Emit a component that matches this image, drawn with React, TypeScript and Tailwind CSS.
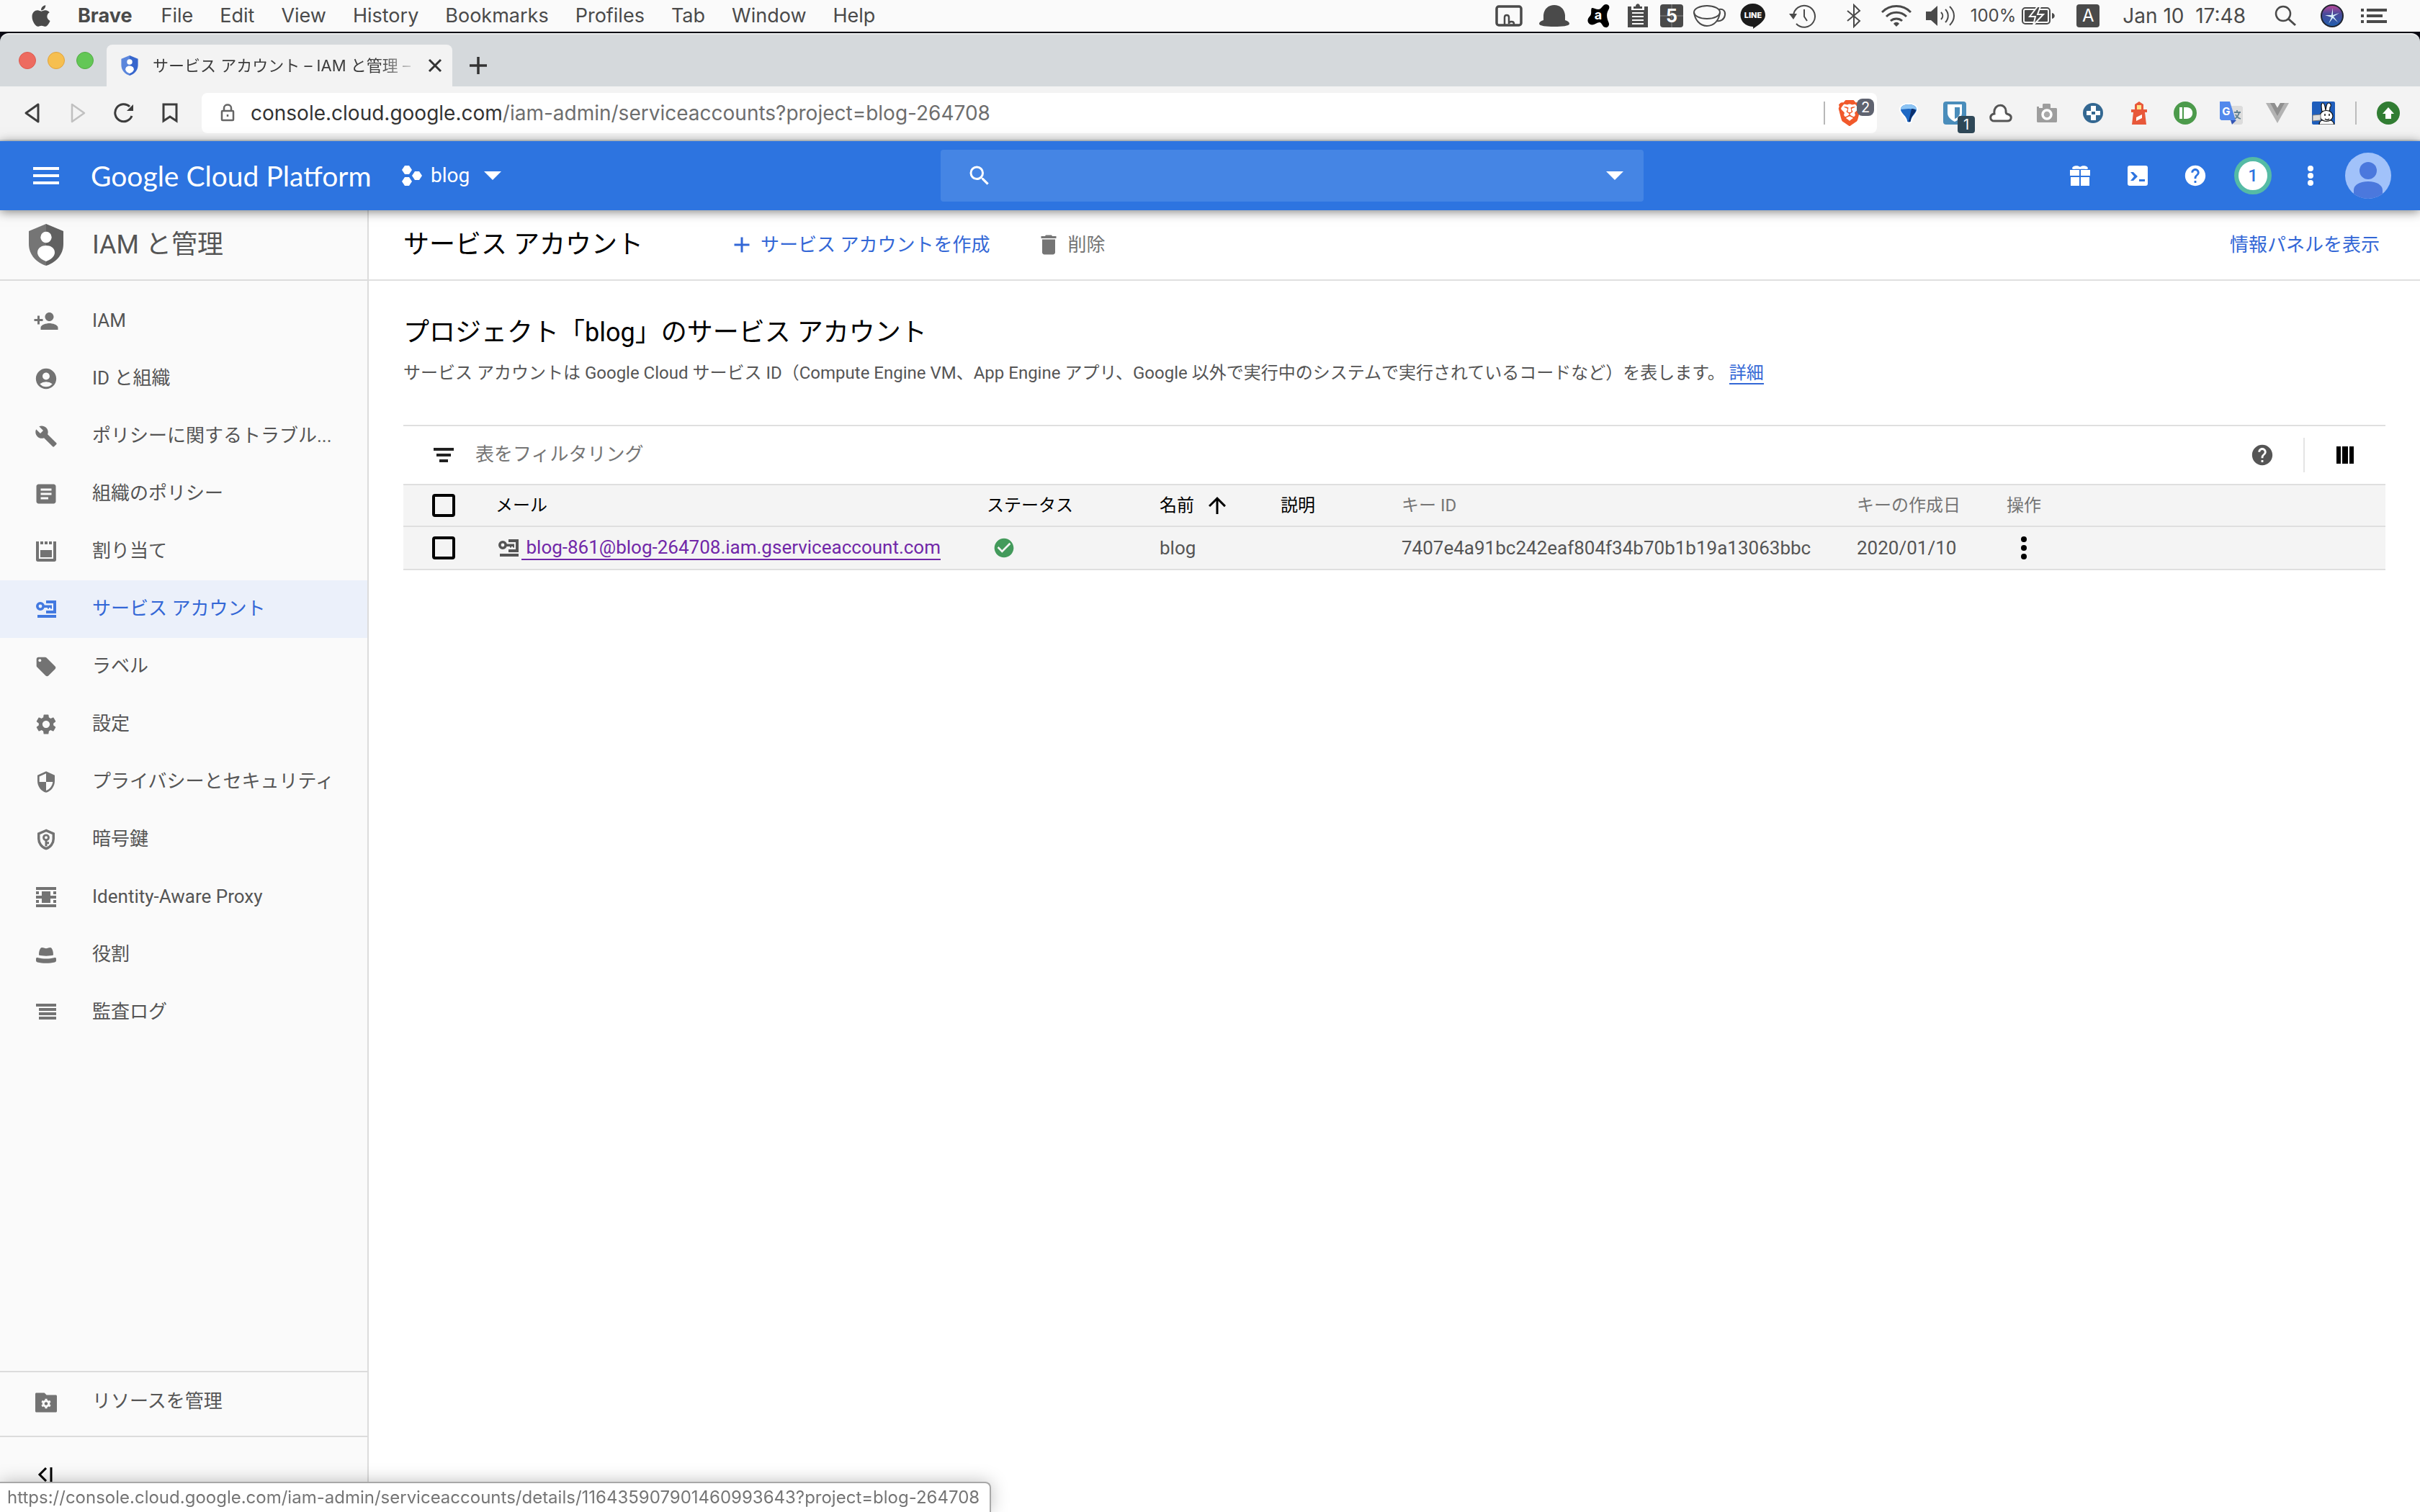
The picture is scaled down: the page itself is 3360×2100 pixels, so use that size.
import type { ReactNode } from "react";
import { FaApple } from "react-icons/fa";
import {
  MdAccountCircle,
  MdAdd,
  MdArrowUpward,
  MdArticle,
  MdBuild,
  MdCheckCircle,
  MdDelete,
  MdHelp,
  MdLocalOffer,
  MdPersonAdd,
  MdSearch,
  MdSecurity,
  MdSettings,
} from "react-icons/md";
import { RiFolderSettingsFill } from "react-icons/ri";
import { SiBrave } from "react-icons/si";

const menus = ["File", "Edit", "View", "History", "Bookmarks", "Profiles", "Tab", "Window", "Help"];

/* ---------- icons ---------- */

const IamShield = ({ className, left, right }: { className: string; left: string; right: string }) => (
  <svg viewBox="0 0 48 58" className={className}>
    <path fill={left} d="M24 0 0 10v18c0 15 11 26 24 30z" />
    <path fill={right} d="M24 0l24 10v18c0 15-11 26-24 30z" />
    <circle cx="24" cy="18.5" r="7.7" fill="#fff" />
    <path fill="#fff" d="M12 40c0-7 6-10 12-10s12 3 12 10c0 5-6 10-12 12-6-2-12-7-12-12z" />
  </svg>
);

const KeyIcon = ({ className }: { className: string }) => (
  <svg viewBox="0 0 18 18" className={className} fill="currentColor">
    <path d="M9 3h7v9H9v-2h5V5H9z" />
    <path d="M3 13h13v2H3z" />
    <path d="M7 6.200h6v2.600h-1V8h-1v.8h-1V8H7z" />
    <circle cx="5" cy="7" r="2.100" fill="none" stroke="currentColor" strokeWidth="1.800" />
  </svg>
);

const QuotaIcon = () => (
  <svg viewBox="0 0 18 18" className="size-9" fill="currentColor">
    <path d="M2 2h2v12h10V2h2v12.800c0 .7-.5 1.200-1.200 1.200H3.200C2.500 16 2 15.500 2 14.800z" />
    <path d="M5 2h2v2H5zM8 2h2v2H8zM11 2h2v2h-2zM5 8h8v5H5z" />
  </svg>
);

const CryptoIcon = () => (
  <svg viewBox="0 0 24 24" className="size-8" fill="none" stroke="currentColor" strokeWidth="2.600">
    <path d="M12 2.600 4.300 6v5.200c0 4.700 3.200 9 7.700 10.300 4.500-1.300 7.700-5.600 7.700-10.300V6z" />
    <circle cx="12" cy="10" r="2.600" strokeWidth="2.200" />
    <path d="M12 12.500V19M12 15.500h3" strokeWidth="2.200" />
  </svg>
);

const ProxyIcon = () => (
  <svg viewBox="0 0 18 18" className="size-9" fill="currentColor">
    <path d="M2 2h14v2H2zM2 14h14v2H2zM2 8h14v2H2zM6 5h6v8H6zM2 5h2v2H2zM14 5h2v2h-2zM2 11h2v2H2zM14 11h2v2h-2z" />
  </svg>
);

const HatIcon = () => (
  <svg viewBox="0 0 18 18" className="size-9" fill="currentColor">
    <path d="M4 9.300C4 6.500 4.800 4 6.200 4c1 0 1.600.6 2.800.6s1.800-.6 2.800-.6C13.200 4 14 6.500 14 9.300c-2 .7-8 .7-10 0z" />
    <path d="M2 12c0-.9.500-1.100 1.400-.9 3.400.9 7.800.9 11.200 0 .9-.2 1.400 0 1.400.9v1c0 .6-.3 1-1 1.200-3.600.9-8.400.9-12 0-.7-.2-1-.6-1-1.200z" />
  </svg>
);

const AuditIcon = () => (
  <svg viewBox="0 0 18 18" className="size-9" fill="currentColor">
    <path d="M2 3h14v2H2zM4 6h12v2H4zM4 9h12v2H4zM4 12h12v2H4z" />
  </svg>
);

const Caret = () => (
  <svg viewBox="0 0 24 12" className="h-3 w-6" fill="#fff">
    <path d="M0 0h24L12 12z" />
  </svg>
);

/* ---------- mac menu bar ---------- */

const MenuBar = () => (
  <div className="flex h-11 items-center bg-[#fafafa] pl-10 pr-[46px] text-[27px] text-[#4a4a4a]">
    <FaApple className="mr-[34px] size-[34px]" />
    <span className="font-bold">Brave</span>
    <div className="ml-10 flex flex-1 gap-[37px]">
      {menus.map((m) => (
        <button key={m} type="button">
          {m}
        </button>
      ))}
    </div>
    <svg viewBox="0 0 38 30" className="h-[30px] w-[38px]" fill="none" stroke="currentColor" strokeWidth="3.500">
      <rect x="2" y="2" width="34" height="26" rx="3" />
      <path d="M13 28V17c0-4 6-4 6 0v9c0-4 7-4 7 0v3" strokeWidth="2.500" />
    </svg>
    <svg viewBox="0 0 44 32" className="ml-5.5 h-8 w-11" fill="currentColor">
      <path d="M7 22V15C8 6 14 1 22 1s14 5 15 14v7c4 1 6 3 6 5 0 3-10 4-21 4S1 30 1 27c0-2 2-4 6-5z" />
    </svg>
    <svg viewBox="0 0 34 34" className="ml-5.5 size-[34px] text-black" fill="currentColor">
      <path d="M8 6c3 0 6 2 9 2 5 0 6-7 11-7 4 0 6 4 3 8-3 5-2 11 0 16 3 5-1 9-4 8-5-1-4-6-8-7-4 0-8 5-13 3-5-3-4-8-1-11 4-4 1-8 3-12z" />
      <text x="17" y="22" fontSize="18" fontWeight="700" textAnchor="middle" fill="#fff">
        a
      </text>
    </svg>
    <svg viewBox="0 0 28 34" className="ml-6 h-[34px] w-7" fill="currentColor">
      <path d="M0 4h5v5h18V4h5v29H0z" />
      <path d="M8 4h3c0-5 6-5 6 0h3v3H8z" />
      <path d="M6 13h16M6 18h16M6 23h16M6 28h16" stroke="#fafafa" strokeWidth="2" />
    </svg>
    <svg viewBox="0 0 34 34" className="ml-4 size-[34px]" fill="currentColor">
      <rect x="1" y="1" width="32" height="32" rx="4" />
      <path d="M1 17h32M17 1v32" stroke="#888" strokeWidth="1" />
      <text x="17" y="26" fontSize="25" fontWeight="700" textAnchor="middle" fill="#fff">
        5
      </text>
    </svg>
    <svg viewBox="0 0 48 32" className="ml-3 h-8 w-12" fill="none" stroke="currentColor" strokeWidth="2">
      <ellipse cx="20" cy="11" rx="18" ry="9" />
      <path d="M2 11c1 10 8 19 18 19s17-8 18-19M37 7c5-1 9 2 8 8-1 6-6 9-11 8" />
    </svg>
    <svg viewBox="0 0 36 36" className="ml-4.5 size-9" fill="#1c1c1c">
      <path d="M18 1a17 16 0 0 1 17 16c0 8-10 14-17 19 0-2 1-3-1-3A17 16 0 0 1 18 1z" />
      <text x="18" y="21" fontSize="11" fontWeight="800" textAnchor="middle" fill="#fff">
        LINE
      </text>
    </svg>
    <svg viewBox="0 0 38 34" className="ml-8 h-[34px] w-[38px]" fill="none" stroke="currentColor" strokeWidth="2">
      <path d="M6 17A15 15 0 1 1 10 28" />
      <path d="M21 8v10l4 6" />
      <path d="M0 14h11l-5 8z" fill="currentColor" stroke="none" />
    </svg>
    <svg viewBox="0 0 20 34" className="ml-[42px] h-[34px] w-5" fill="none" stroke="currentColor" strokeWidth="2">
      <path d="m1 10 17 14-8 8V2l8 8L1 24" />
    </svg>
    <svg viewBox="0 0 42 34" className="ml-7 h-[34px] w-[42px]" fill="none" stroke="currentColor" strokeWidth="3">
      <path d="M1 12a28 28 0 0 1 40 0M7 18a20 20 0 0 1 28 0M13 24a12 12 0 0 1 16 0" />
      <path d="m21 32-4-4c2-3 6-3 8 0z" fill="currentColor" stroke="none" />
    </svg>
    <svg viewBox="0 0 42 34" className="ml-5 h-[34px] w-[42px]" fill="none" stroke="currentColor" strokeWidth="2">
      <path d="M0 11h7l9-8v28l-9-8H0z" fill="currentColor" stroke="none" />
      <path d="M21 12c3 3 3 7 0 10M27 8c5 5 5 13 0 18M33 4c8 8 8 18 0 26" />
    </svg>
    <span className="ml-5 text-2xl">100%</span>
    <svg viewBox="0 0 46 26" className="ml-2 h-[26px] w-[46px]" fill="currentColor">
      <rect x="1" y="2" width="38" height="22" rx="4" fill="none" stroke="currentColor" strokeWidth="2" />
      <rect x="4" y="5" width="32" height="16" rx="1" />
      <path d="M42 9c5 1 5 7 0 8z" />
      <path d="M22 0 11 14h8l-3 12 14-15h-8l4-11z" stroke="#fafafa" strokeWidth="2" />
    </svg>
    <span className="ml-[30px] flex size-8 items-center justify-center rounded-sm bg-[#4a4a4a] text-2xl text-white">A</span>
    <span className="ml-8 whitespace-pre text-[28px]">Jan 10  17:48</span>
    <svg viewBox="0 0 30 30" className="ml-10 size-[30px]" fill="none" stroke="currentColor" strokeWidth="2.500">
      <circle cx="12" cy="12" r="10" />
      <path d="m19 19 10 9" strokeWidth="3" />
    </svg>
    <svg viewBox="0 0 32 32" className="ml-[34px] size-8">
      <defs>
        <linearGradient id="siri" x1="0" y1="0" x2="0" y2="1">
          <stop offset="0" stopColor="#c0479c" />
          <stop offset="0.4" stopColor="#4a4a9a" />
          <stop offset="1" stopColor="#1f5fae" />
        </linearGradient>
      </defs>
      <circle cx="16" cy="16" r="15" fill="url(#siri)" stroke="#20242f" strokeWidth="2" />
      <path d="m17 5 0 10 9-3-8 5 6 8-7-6-6 8 4-9-9-3 9 0z" fill="#d9f1fa" />
    </svg>
    <svg viewBox="0 0 36 20" className="ml-6 h-5 w-9" fill="currentColor">
      <path d="M0 0h4v4H0zM8 0h28v4H8zM0 8h4v4H0zM8 8h22v4H8zM0 16h4v4H0zM8 16h28v4H8z" />
    </svg>
  </div>
);

/* ---------- browser chrome ---------- */

const TabStrip = () => (
  <div className="flex h-[74px] items-end rounded-t-xl border-t-2 border-[#e8eaeb] bg-[#d5d9dc] pl-[26px]">
    <div className="flex gap-4 self-center">
      <span className="size-6 rounded-full border border-[#dd5a4f] bg-[#ed6b60]" />
      <span className="size-6 rounded-full border border-[#e0a33e] bg-[#f6bf50]" />
      <span className="size-6 rounded-full border border-[#52ab44] bg-[#63c756]" />
    </div>
    <div className="ml-[18px] flex h-[58px] w-[480px] items-center rounded-t-lg bg-[#f3f3f3] pl-5 pr-3.5 text-[22px] text-[#3c3c3c]">
      <IamShield className="h-7 w-6 shrink-0" left="#5b86dc" right="#3766cd" />
      <span className="ml-5 flex-1 whitespace-nowrap [mask-image:linear-gradient(to_right,black_85%,transparent)]">
        サービス アカウント – IAM と管理 –
      </span>
      <button type="button" aria-label="Close tab" className="ml-3">
        <svg viewBox="0 0 20 20" className="size-5" fill="none" stroke="#333" strokeWidth="3">
          <path d="m2 2 16 16M18 2 2 18" />
        </svg>
      </button>
    </div>
    <button type="button" aria-label="New tab" className="ml-6 flex h-[58px] items-center">
      <svg viewBox="0 0 24 24" className="size-6" fill="none" stroke="#333" strokeWidth="3.500">
        <path d="M12 0v24M0 12h24" />
      </svg>
    </button>
  </div>
);

const Extensions = () => (
  <div className="flex items-center gap-8">
    <svg viewBox="0 0 32 32" className="size-8">
      <path
        d="M16 4c7 0 11 3 11 7 0 5-8 10-8 16 0 2-5 2-5 0 0-6-9-11-9-16 0-4 4-7 11-7z"
        fill="#1d68c4"
        stroke="#fff"
        strokeWidth="4"
        paintOrder="stroke"
      />
      <path d="M16 4c7 0 11 3 11 7l-11-1-11 1c0-4 4-7 11-7z" fill="#8cc4f4" />
      <path d="M20 10c2 0 5 0 6 3-2 4-7 8-7 13l-1 2h-2z" fill="#0c2f6c" />
    </svg>
    <div className="relative size-8">
      <svg viewBox="0 0 32 32" className="size-8">
        <rect width="32" height="32" rx="4" fill="#4a8dbb" />
        <path d="M6 4h20v12c0 6-6 10-10 12-4-2-10-6-10-12z" fill="#fff" />
        <path d="M16 8h7v8c0 4-4 7-7 8z" fill="#4a8dbb" />
      </svg>
      <span className="absolute left-5 top-5 flex size-6 items-center justify-center rounded-sm bg-[#2f4858] text-xl text-white">
        1
      </span>
    </div>
    <svg viewBox="0 0 32 26" className="h-[26px] w-8" fill="#fff" stroke="#555" strokeWidth="3">
      <path d="M7 24c-7 0-7-9 0-10C5-1 24-1 23 11c0 3 1 3 4 4 5 2 4 9-2 9z" />
    </svg>
    <svg viewBox="0 0 32 32" className="size-8">
      <path d="M2 10V7h3v2h5V4l1-1h9l1 1v5h8l1 1v18l-1 1H3l-1-1z" fill="#9d9d9d" />
      <circle cx="16" cy="18" r="6" fill="#aaa" stroke="#fff" strokeWidth="3.500" />
    </svg>
    <svg viewBox="0 0 32 32" className="size-8">
      <circle cx="16" cy="16" r="14" fill="#336791" />
      <path d="M13 6h7v7h6v6h-6v7h-7v-7H7v-6h6z" fill="#fff" />
      <path d="M14 14h5v4h-5z" fill="#336791" />
    </svg>
    <svg viewBox="0 0 32 32" className="size-8">
      <path d="m16 0 6 4v7h5v4h-3l2 17H6l2-17H5v-4h5V4z" fill="#e8583a" />
      <path d="M13 5h6v6h-6z" fill="#ffe38a" />
      <path d="m12 22 8-4v5l-8 4z" fill="#fff" />
    </svg>
    <svg viewBox="0 0 32 32" className="size-8">
      <circle cx="16" cy="16" r="16" fill="#4c9a4b" />
      <path d="M8 8h4v16H8zM14 8h4c11 0 11 16 0 16h-4z" fill="#fff" />
    </svg>
    <svg viewBox="0 0 32 32" className="size-8">
      <path d="M12 6h18l2 2v22l-2 2H19z" fill="#dcdcdc" />
      <path d="M0 0h14l8 26H2l-2-2z" fill="#5289ec" />
      <path d="M15 26h8l-6 6z" fill="#3556b4" />
      <text x="9" y="19" fontSize="15" fontWeight="700" textAnchor="middle" fill="#fff">
        G
      </text>
      <path d="M20 15h9M24 12v3M27 15c-1 4-3 7-6 9M22 18c1 3 4 5 7 6" fill="none" stroke="#60808f" strokeWidth="1.800" />
    </svg>
    <svg viewBox="0 0 32 32" className="size-8">
      <path d="M0 2h12l4 7 4-7h12L16 30z" fill="#b3b3b3" />
      <path d="M6 2h6l4 7 4-7h6L16 20z" fill="#8f8f8f" />
    </svg>
    <svg viewBox="0 0 32 32" className="size-8">
      <rect width="32" height="32" rx="2" fill="#1f5ebc" />
      <g fill="#fff" stroke="#111" strokeWidth="1.200">
        <path d="M10 32c0-5 4-7 10-7s10 2 11 7z" />
        <path d="M14 14c-1-5-2-12 1-12s3 6 4 10c1-5 1-10 4-10 4 0 4 5 2 6 0 2 0 4-1 6z" />
        <ellipse cx="20" cy="20" rx="9" ry="7.500" />
      </g>
      <path d="M1 19l11-1v8l-11 1z" fill="#ddd" stroke="#777" strokeWidth="1" />
      <path d="M18 17v3M24 17v3M18 24c2 2 4 2 6 0" stroke="#111" strokeWidth="1.500" fill="none" />
    </svg>
    <span className="-mx-1 h-8 w-0.5 bg-[#bcbcbc]" />
    <svg viewBox="0 0 32 32" className="size-8">
      <circle cx="16" cy="16" r="16" fill="#317d33" />
      <path d="m16 8 8 9h-4v7h-8v-7H8z" fill="#fff" />
    </svg>
  </div>
);

const Toolbar = () => (
  <div className="flex h-[76px] items-center border-b-2 border-[#d5d9dc] bg-[#f3f3f3] pl-[34px] pr-7">
    <button type="button" aria-label="Back">
      <svg viewBox="0 0 22 28" className="h-7 w-5.5" fill="none" stroke="#3c3c3c" strokeWidth="3" strokeLinejoin="round">
        <path d="M19 2v24L2 14z" />
      </svg>
    </button>
    <button type="button" aria-label="Forward" className="ml-[42px]">
      <svg viewBox="0 0 22 28" className="h-7 w-5.5" fill="none" stroke="#c0c0c0" strokeWidth="2.500" strokeLinejoin="round">
        <path d="M2 2v24l17-12z" />
      </svg>
    </button>
    <button type="button" aria-label="Reload" className="ml-[38px]">
      <svg viewBox="0 0 28 28" className="size-7" fill="none" stroke="#3c3c3c" strokeWidth="3">
        <path d="M22 5A12 12 0 1 0 25 18" />
        <path d="M27 2v9h-9z" fill="#3c3c3c" stroke="none" />
      </svg>
    </button>
    <button type="button" aria-label="Bookmark" className="ml-[38px]">
      <svg viewBox="0 0 24 28" className="h-7 w-6" fill="none" stroke="#3c3c3c" strokeWidth="3">
        <path d="M3 2h18v23l-9-6-9 6z" />
      </svg>
    </button>
    <div className="relative ml-8 mr-7 flex h-14 flex-1 items-center rounded-lg bg-white pl-[26px] pr-5">
      <svg viewBox="0 0 20 26" className="h-[26px] w-5" fill="none" stroke="#666" strokeWidth="2.500">
        <rect x="2" y="10" width="16" height="13" rx="1" />
        <path d="M5 10V6c0-6 10-6 10 0v4" />
        <path d="M10 15v3" />
      </svg>
      <div className="ml-[22px] flex-1 text-[28px]">
        <span className="text-[#333]">console.cloud.google.com</span>
        <span className="text-[#6e6e6e]">/iam-admin/serviceaccounts?project=blog-264708</span>
      </div>
      <span className="mr-4 h-8 w-0.5 bg-[#b8b8b8]" />
      <SiBrave className="size-9 text-[#f1592b]" />
      <span className="absolute right-1 top-2 flex size-6 items-center justify-center rounded-lg bg-[#5f6370] text-xl text-white">
        2
      </span>
    </div>
    <Extensions />
  </div>
);

/* ---------- console ---------- */

const HeaderSlot = ({ label, children }: { label: string; children: ReactNode }) => (
  <button type="button" aria-label={label} className="flex h-16 w-20 items-center justify-center">
    {children}
  </button>
);

const Header = () => (
  <header className="relative z-10 flex h-24 items-center bg-[#2d74e0] pl-[46px] pr-8 text-white shadow-[0_2px_14px_rgba(0,0,0,0.5)]">
    <button type="button" aria-label="Menu">
      <svg viewBox="0 0 36 24" className="h-6 w-9" fill="#fff">
        <path d="M0 0h36v4H0zM0 10h36v4H0zM0 20h36v4H0z" />
      </svg>
    </button>
    <div className="w-[476px] shrink-0 pl-11 text-[39px] font-['Lato','Noto_Sans_CJK_JP',sans-serif]">Google Cloud Platform</div>
    <button type="button" className="flex w-[748px] items-center text-[28px]">
      <svg viewBox="0 0 28 28" className="size-7" fill="#fff">
        <path d="M4 0h6l4 6-4 6H4L0 6zM4 16h6l4 6-4 6H4l-4-6zM18 8h6l4 6-4 6h-6l-4-6z" />
      </svg>
      <span className="ml-3 mr-5">blog</span>
      <Caret />
    </button>
    <label className="flex h-[72px] flex-1 items-center rounded-sm bg-[#4585e4] pl-9 pr-7">
      <MdSearch className="size-9" />
      <input aria-label="検索" className="min-w-0 flex-1 bg-transparent outline-none" />
      <Caret />
    </label>
    <div className="ml-[566px] flex items-center">
      <HeaderSlot label="Gift">
        <svg viewBox="0 0 28 28" className="size-7" fill="#fff">
          <path d="M0 6h13v8H0zM15 6h13v8H15zM1 16h12v12H1zM15 16h12v12H15z" />
          <path d="M14 5C10 4 4 6 3 4c0-4 8-5 11-2 3-3 11-2 11 2-1 2-7 0-11 1z" />
        </svg>
      </HeaderSlot>
      <HeaderSlot label="Cloud Shell">
        <svg viewBox="0 0 28 28" className="size-7">
          <rect width="28" height="28" rx="3" fill="#fff" />
          <path d="M4 9h4l6 6-6 6H4l5-6zM16 19h8v3h-8z" fill="#2d74e0" />
        </svg>
      </HeaderSlot>
      <HeaderSlot label="Help">
        <MdHelp className="size-[34px]" />
      </HeaderSlot>
      <HeaderSlot label="Notifications">
        <span className="flex size-[52px] items-center justify-center rounded-full border-6 border-[#55bba5] bg-white text-2xl font-medium text-[#2d74e0]">
          1
        </span>
      </HeaderSlot>
      <HeaderSlot label="More">
        <svg viewBox="0 0 8 28" className="h-7 w-2" fill="#fff">
          <circle cx="4" cy="4" r="4" />
          <circle cx="4" cy="14" r="4" />
          <circle cx="4" cy="24" r="4" />
        </svg>
      </HeaderSlot>
      <HeaderSlot label="Account">
        <svg viewBox="0 0 64 64" className="size-16 rounded-full bg-[#a1c2fa]" fill="#4b78dd">
          <circle cx="32" cy="25" r="12" />
          <path d="M12 58V52c0-16 40-16 40 0v6c-10 8-30 8-40 0z" />
        </svg>
      </HeaderSlot>
    </div>
  </header>
);

const navItems: { label: string; icon: ReactNode; active?: boolean }[] = [
  { label: "IAM", icon: <MdPersonAdd className="size-9" /> },
  { label: "ID と組織", icon: <MdAccountCircle className="size-[34px]" /> },
  { label: "ポリシーに関するトラブル...", icon: <MdBuild className="size-8" /> },
  { label: "組織のポリシー", icon: <MdArticle className="size-9" /> },
  { label: "割り当て", icon: <QuotaIcon /> },
  { label: "サービス アカウント", icon: <KeyIcon className="size-9" />, active: true },
  { label: "ラベル", icon: <MdLocalOffer className="size-8" /> },
  { label: "設定", icon: <MdSettings className="size-[34px]" /> },
  { label: "プライバシーとセキュリティ", icon: <MdSecurity className="size-8" /> },
  { label: "暗号鍵", icon: <CryptoIcon /> },
  { label: "Identity-Aware Proxy", icon: <ProxyIcon /> },
  { label: "役割", icon: <HatIcon /> },
  { label: "監査ログ", icon: <AuditIcon /> },
];

const Sidebar = () => (
  <aside className="flex w-[512px] shrink-0 flex-col border-r-2 border-[#dcdcdc] bg-[#fafafa] text-[26px] text-[#555]">
    <div className="flex h-[98px] items-center border-b-2 border-[#dcdcdc] pl-10">
      <IamShield className="h-[58px] w-12" left="#757575" right="#616161" />
      <span className="ml-10 text-4xl">IAM と管理</span>
    </div>
    <nav className="flex-1 pt-4">
      {navItems.map((item) => (
        <a
          key={item.label}
          href="#"
          className={
            item.active
              ? "flex h-20 items-center bg-[#ebf0fa] text-[#3367d6]"
              : "flex h-20 items-center"
          }
        >
          <span
            className={
              item.active
                ? "flex w-32 shrink-0 justify-center text-[#4279e0]"
                : "flex w-32 shrink-0 justify-center text-[#737373]"
            }
          >
            {item.icon}
          </span>
          <span className="whitespace-nowrap pb-0.5">{item.label}</span>
        </a>
      ))}
    </nav>
    <a href="#" className="flex h-[92px] items-center border-y-2 border-[#dcdcdc] pb-1">
      <span className="flex w-32 justify-center text-[#737373]">
        <RiFolderSettingsFill className="size-9" />
      </span>
      <span className="pb-1">リソースを管理</span>
    </a>
    <button type="button" aria-label="Collapse" className="flex h-[104px] items-center pl-[52px] text-black">
      <svg viewBox="0 0 22 20" className="h-5 w-5.5" fill="none" stroke="currentColor" strokeWidth="3">
        <path d="M12 1 3 10l9 9M19 0v20" />
      </svg>
    </button>
  </aside>
);

const Checkbox = ({ label }: { label: string }) => (
  <input type="checkbox" aria-label={label} className="ml-10 block size-8 appearance-none rounded-sm border-4 border-black" />
);

const AccountTable = () => (
  <table className="w-full table-fixed border-collapse text-left">
    <colgroup>
      <col className="w-32" />
      <col className="w-[682px]" />
      <col className="w-60" />
      <col className="w-[168px]" />
      <col className="w-[168px]" />
      <col className="w-[632px]" />
      <col className="w-52" />
      <col className="w-20" />
      <col />
    </colgroup>
    <thead>
      <tr className="h-[57px] border-b-2 border-[#dfdfdf] bg-[#f4f4f4] text-2xl text-black *:font-normal">
        <th>
          <Checkbox label="すべて選択" />
        </th>
        <th>メール</th>
        <th>ステータス</th>
        <th>
          <span className="flex items-center gap-3.5">
            名前
            <MdArrowUpward className="size-9" />
          </span>
        </th>
        <th>説明</th>
        <th className="text-[#757575]">キー ID</th>
        <th className="text-[#757575]">キーの作成日</th>
        <th className="text-[#757575]">操作</th>
        <th />
      </tr>
    </thead>
    <tbody>
      <tr className="h-15 border-b-2 border-[#dfdfdf] bg-[#f4f4f4] text-[26px] text-[#555]">
        <td>
          <Checkbox label="blog" />
        </td>
        <td>
          <span className="flex items-center">
            <KeyIcon className="size-9" />
            <a href="#" className="whitespace-pre border-b-2 border-[#7127a8] leading-8 text-[#7127a8]">
              {" "}
              blog-861@blog-264708.iam.gserviceaccount.com
            </a>
          </span>
        </td>
        <td>
          <MdCheckCircle className="ml-2 size-8 text-[#439a5b]" />
        </td>
        <td>blog</td>
        <td />
        <td>7407e4a91bc242eaf804f34b70b1b19a13063bbc</td>
        <td>2020/01/10</td>
        <td>
          <button type="button" aria-label="操作" className="ml-5 block">
            <svg viewBox="0 0 8 32" className="h-8 w-2" fill="#000">
              <circle cx="4" cy="4" r="4" />
              <circle cx="4" cy="16" r="4" />
              <circle cx="4" cy="28" r="4" />
            </svg>
          </button>
        </td>
        <td />
      </tr>
    </tbody>
  </table>
);

const Main = () => (
  <main className="min-w-0 flex-1 bg-white">
    <div className="flex h-[98px] items-center border-b-2 border-[#dfdfdf] pl-12 pr-14 text-[26px] text-[#3367d6]">
      <h1 className="w-[452px] text-4xl text-black">サービス アカウント</h1>
      <button type="button" className="flex items-center gap-2">
        <MdAdd className="size-9" />
        サービス アカウントを作成
      </button>
      <button type="button" className="ml-16 flex items-center gap-2 text-[#757575]">
        <MdDelete className="size-9" />
        削除
      </button>
      <a href="#" className="ml-auto">
        情報パネルを表示
      </a>
    </div>
    <section className="pl-12 pr-12 pt-[46px]">
      <h2 className="text-4xl leading-[52px]">プロジェクト「blog」のサービス アカウント</h2>
      <p className="mt-2.5 text-2xl leading-10 text-[#555]">
        サービス アカウントは Google Cloud サービス ID（Compute Engine VM、App Engine アプリ、Google
        以外で実行中のシステムで実行されているコードなど）を表します。{" "}
        <a href="#" className="border-b-2 border-[#3367d6] text-[#3367d6]">
          詳細
        </a>
      </p>
      <div className="mt-[52px] flex h-21 items-center border-y-2 border-[#dfdfdf] pl-[42px] pr-11">
        <svg viewBox="0 0 28 20" className="h-5 w-7" fill="#212121">
          <path d="M0 0h28v4H0zM4 8h20v4H4zM8 16h12v4H8z" />
        </svg>
        <input
          aria-label="表をフィルタリング"
          placeholder="表をフィルタリング"
          className="ml-[30px] flex-1 pb-0.5 text-[26px] outline-none placeholder:text-[#757575]"
        />
        <MdHelp className="size-[34px] text-[#555]" />
        <span className="ml-10 mr-11 h-12 w-0.5 bg-[#e4e4e4]" />
        <svg viewBox="0 0 24 24" className="h-6 w-6" fill="#000">
          <path d="M0 0h6v24H0zM8 0h8v24H8zM18 0h6v24h-6z" />
        </svg>
      </div>
      <AccountTable />
    </section>
  </main>
);

export default function App() {
  return (
    <div className="flex min-h-screen flex-col bg-[#0a0a14] font-['Inter','Noto_Sans_CJK_JP',sans-serif]">
      <MenuBar />
      <div className="mt-0.5 flex flex-1 flex-col">
        <TabStrip />
        <Toolbar />
        <div className="flex flex-1 flex-col font-['Roboto','Noto_Sans_CJK_JP',sans-serif]">
          <Header />
          <div className="flex flex-1">
            <Sidebar />
            <Main />
          </div>
        </div>
      </div>
      <div className="fixed bottom-0 left-0 z-20 flex h-[42px] items-center rounded-tr-lg border-r-2 border-t-2 border-[#a8a8a8] bg-white pl-2.5 pr-3.5 text-2xl text-[#757575] shadow-[0_0_24px_rgba(0,0,0,0.25)]">
        https://console.cloud.google.com/iam-admin/serviceaccounts/details/116435907901460993643?project=blog-264708
      </div>
    </div>
  );
}
